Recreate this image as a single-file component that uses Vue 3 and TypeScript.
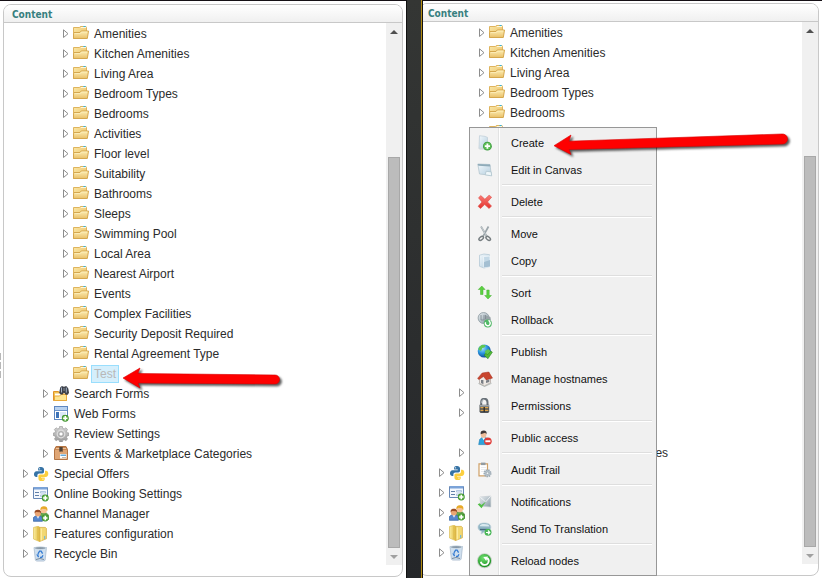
<script setup lang="ts">
interface TreeNode {
  label: string
  icon: string
  level: number
  leaf?: boolean
  selected?: boolean
}

interface MenuItem {
  label: string
  icon: string
}

const folders: string[] = [
  'Amenities', 'Kitchen Amenities', 'Living Area', 'Bedroom Types', 'Bedrooms', 'Activities',
  'Floor level', 'Suitability', 'Bathrooms', 'Sleeps', 'Swimming Pool', 'Local Area',
  'Nearest Airport', 'Events', 'Complex Facilities', 'Security Deposit Required',
  'Rental Agreement Type',
]

const nodes: TreeNode[] = [
  ...folders.map((label): TreeNode => ({ label, icon: 'folder', level: 2 })),
  { label: 'Test', icon: 'folder', level: 2, leaf: true, selected: true },
  { label: 'Search Forms', icon: 'search', level: 1 },
  { label: 'Web Forms', icon: 'webform', level: 1 },
  { label: 'Review Settings', icon: 'gear', level: 1, leaf: true },
  { label: 'Events & Marketplace Categories', icon: 'package', level: 1 },
  { label: 'Special Offers', icon: 'python', level: 0 },
  { label: 'Online Booking Settings', icon: 'form', level: 0 },
  { label: 'Channel Manager', icon: 'users', level: 0 },
  { label: 'Features configuration', icon: 'binder', level: 0 },
  { label: 'Recycle Bin', icon: 'bin', level: 0 },
]

const panes: string[] = ['before', 'after']

// Labels lying wholly beneath the open context menu are not painted.
const firstCoveredRow = 5
const widestLabel = 'Events & Marketplace Categories'

function isCovered(pane: string, row: number): boolean {
  return pane === 'after' && row >= firstCoveredRow && nodes[row].label !== widestLabel
}

const menuGroups: MenuItem[][] = [
  [{ label: 'Create', icon: 'create' }, { label: 'Edit in Canvas', icon: 'canvas' }],
  [{ label: 'Delete', icon: 'delete' }],
  [{ label: 'Move', icon: 'move' }, { label: 'Copy', icon: 'copy' }],
  [{ label: 'Sort', icon: 'sort' }, { label: 'Rollback', icon: 'rollback' }],
  [
    { label: 'Publish', icon: 'publish' },
    { label: 'Manage hostnames', icon: 'home' },
    { label: 'Permissions', icon: 'lock' },
  ],
  [{ label: 'Public access', icon: 'access' }],
  [{ label: 'Audit Trail', icon: 'audit' }],
  [{ label: 'Notifications', icon: 'notify' }, { label: 'Send To Translation', icon: 'translate' }],
  [{ label: 'Reload nodes', icon: 'reload' }],
]
</script>

<template>
  <div class="stage">
    <svg class="defs" aria-hidden="true">
      <defs>
        <linearGradient id="gFolder" x1="0" y1="0" x2="0" y2="1"><stop offset="0" stop-color="#fdeeb4" /><stop offset="1" stop-color="#e9c069" /></linearGradient>
        <linearGradient id="gFolderBack" x1="0" y1="0" x2="1" y2="1"><stop offset="0" stop-color="#fbe8a8" /><stop offset="1" stop-color="#e8bd60" /></linearGradient>
        <linearGradient id="gBinder" x1="0" y1="0" x2="1" y2="0"><stop offset="0" stop-color="#f9eda0" /><stop offset="1" stop-color="#e2b93c" /></linearGradient>
        <linearGradient id="gGear" x1="0" y1="0" x2="0" y2="1"><stop offset="0" stop-color="#d4d4d4" /><stop offset="1" stop-color="#9c9c9c" /></linearGradient>
        <linearGradient id="gPage" x1="0" y1="0" x2="1" y2="1"><stop offset="0" stop-color="#f2f8fc" /><stop offset="1" stop-color="#b4cede" /></linearGradient>
        <linearGradient id="gRed" x1="0" y1="0" x2="0" y2="1"><stop offset="0" stop-color="#fa7d76" /><stop offset="1" stop-color="#e3322e" /></linearGradient>
        <linearGradient id="gSteel" x1="0" y1="0" x2="1" y2="1"><stop offset="0" stop-color="#e9eef1" /><stop offset="1" stop-color="#8699a4" /></linearGradient>
        <radialGradient id="gGlobe" cx=".35" cy=".3" r=".75"><stop offset="0" stop-color="#a5e3ff" /><stop offset=".5" stop-color="#2b96dd" /><stop offset="1" stop-color="#0c3f91" /></radialGradient>
        <radialGradient id="gGreen" cx=".4" cy=".3" r=".75"><stop offset="0" stop-color="#6fe06f" /><stop offset="1" stop-color="#138a1a" /></radialGradient>
        <symbol id="plus" viewBox="0 0 8 8"><circle cx="4" cy="4" r="3.7" fill="#3e8e2c" /><circle cx="4" cy="4" r="2.9" fill="#62b54c" /><path d="M3.2 1.7h1.6v1.5h1.5v1.6H4.8v1.5H3.2V4.8H1.7V3.2h1.5z" fill="#fff" /></symbol>
      </defs>
      <symbol id="i-folder" viewBox="0 0 16 16">
        <path d="M.5 12.5V1.500h6l.8-1H13l.5 1v9z" fill="url(#gFolderBack)" stroke="#dfb45e" />
        <path d="M8 1.500h5" stroke="#fff6dc" /><path d="M10.500 0H12.500v1h-2z" fill="#28b5e8" />
        <path d="M.5 12.5V7.500l.5-1h6l1.200-1.500h7.300L14.300 12.5z" fill="url(#gFolder)" stroke="#d5a74d" />
        <path d="M2 7.500h5.300L8.600 6h5.600" fill="none" stroke="#fff3c8" stroke-width=".6" />
      </symbol>
      <symbol id="i-search" viewBox="0 0 16 16">
        <path d="M.5 14.5v-9h5l1 1.5h7v7.5z" fill="#f2c454" stroke="#df942a" />
        <path d="M2 7.500h10.5v3H2z" fill="#fff" /><path d="M1.5 14.500V10h5L8 8.5h5.500v6z" fill="#fde591" stroke="#e9aa3b" />
        <path d="M7.2 1.5 8.5.2h1.7l.8 1 .8-1h1.8l1.7 2.3.7 4.2-1.2 2.1h-2.2l-1-1.8-.9-.2-1 1.6H7.5L6.2 6.7z" fill="#3d4149" />
        <path d="M8.5 1.5v5M13.3 1.6v5" stroke="#a2b2c8" /><path d="M11 2v3" stroke="#89909c" />
      </symbol>
      <symbol id="i-webform" viewBox="0 0 16 16">
        <rect x="1.5" y=".5" width="13" height="13" fill="#fff" stroke="#5e87c1" /><path d="M2 1h12v3H2z" fill="#b9d2f0" /><path d="M2 4.5h12" stroke="#6e95ca" />
        <path d="M3 6h3v6H3z" fill="#3e73b8" /><path d="M7 6h6v6H7z" fill="#dbe8f7" />
        <use href="#plus" x="8.500" y="8.500" width="7.500" height="7.500" />
      </symbol>
      <symbol id="i-gear" viewBox="0 0 16 16">
        <path d="M6.7.3h2.6l.4 2 1.5.6 1.7-1.1 1.6 1.7-1 1.7.7 1.5 2 .4v2.3l-2 .5-.7 1.5 1.1 1.7-1.7 1.6-1.7-1-1.5.6-.4 1.7H6.7l-.4-1.7-1.5-.6-1.7 1-1.7-1.6 1.1-1.7-.6-1.5-1.7-.5V7.1l1.7-.4.6-1.5L1.4 3.5l1.7-1.7 1.7 1.1 1.5-.6z" fill="url(#gGear)" stroke="#929292" stroke-width=".6" />
        <circle cx="8" cy="8" r="3.8" fill="none" stroke="#dedede" stroke-width="1.2" /><circle cx="8" cy="8" r="2.1" fill="#fff" stroke="#999" stroke-width=".7" />
      </symbol>
      <symbol id="i-package" viewBox="0 0 16 16">
        <path d="m1.5 3.5 1.500-3h10l1.500 3v10h-13z" fill="#c98752" stroke="#b37443" /><path d="M2 4h12v9H2z" fill="#dfa675" />
        <path d="M3 2.5h10" stroke="#ebc19a" /><path d="M6.3 1h3.4v5l-1-.8-.8.8-.8-.8-.8.8z" fill="#4f4236" />
        <path d="M7 8h6.500v4.500H7z" fill="#fff" /><path d="M7.500 8.500h5.500v1.500H7.500z" fill="#65a9d9" /><path d="M9 11.5h4" stroke="#c2b8ac" />
      </symbol>
      <symbol id="i-python" viewBox="0 0 18 16">
        <path d="M9.100 0C5.500 0 5.800 1.700 5.800 3.500v.7h4v.6H4C2.100 4.800 1.100 6.300 1.100 8.400s1.200 3.100 2.600 3.100h1.200V9.800c0-1.300 1-2.300 2.200-2.300h3.400c1.100 0 1.900-.8 1.900-1.900V2.700C12.400 1 11.100 0 9.100 0z" fill="#3673a5" />
        <path d="M9.500 16c3.500 0 3.700-1.500 3.700-3v-1.100H9v-.6h5.300c1.800 0 2.900-1.300 2.900-3.600 0-2.200-1-3.300-2.500-3.300h-1.200v1.800c0 1.300-.9 2.400-2.100 2.400H8c-1.100 0-1.900.9-1.900 2V13c0 1.900 1.400 3 3.400 3z" fill="#fccf3e" />
        <circle cx="7.4" cy="2.200" r=".7" fill="#fff" /><circle cx="11.200" cy="13.700" r=".7" fill="#fff" />
      </symbol>
      <symbol id="i-form" viewBox="0 0 16 16">
        <path d="M.5 1.500h14v11H.5z" fill="#f4f8fd" stroke="#6788b6" /><path d="M1 1h13v2.500H1z" fill="#7ba3d8" />
        <path d="M2 6.500h4M2 9.5h4" stroke="#607fa8" /><path d="M7.5 5.500h5v1.5h-5zM7.5 9h5v1.5h-5z" fill="#e8f0f9" stroke="#9bb6d7" stroke-width=".7" />
        <use href="#plus" x="8.5" y="8" width="7.500" height="8" />
      </symbol>
      <symbol id="i-users" viewBox="0 0 16 16">
        <path d="M6.5 12V8.2L8.3 7h5l2.3 2v4.5H8z" fill="#65a950" stroke="#468737" stroke-width=".6" />
        <circle cx="10.8" cy="4.2" r="3.1" fill="#f8c394" /><path d="M7.4 4.3C7 1 9 .1 11 .2c2.8 0 4 2 3.2 4.8L13 3.2 9.3 2.8z" fill="#e7aa28" />
        <path d="M.4 15.3v-3.7L2.4 10h5l2 1.6v3.7z" fill="#5686cd" stroke="#315f9e" stroke-width=".7" />
        <path d="M3.5 10h3L5 12.7z" fill="#e5f0fe" /><circle cx="4.9" cy="7.4" r="3" fill="#eba674" />
        <path d="M1.6 7.5C1.1 4.6 3 3.6 5 3.7c2.5.1 3.7 1.6 3.1 4L7 6.2 3 5.9z" fill="#994b23" />
        <use href="#plus" x="8.5" y="8" width="7.5" height="8" />
      </symbol>
      <symbol id="i-binder" viewBox="0 0 16 16">
        <path d="M.5 1.5 5 .3 6.5 1v14.5L.5 13z" fill="url(#gBinder)" stroke="#ddbd55" stroke-width=".7" />
        <path d="M6.6 1.4h5.8l1 1v10.4l-6.8 2.7z" fill="#f2d873" stroke="#d4a834" stroke-width=".7" />
        <path d="M8.3 2.5v12" stroke="#fff0a9" /><path d="M11.7 10v3" stroke="#62b3df" /><path d="M4.8 1v13" stroke="#dab74b" stroke-width=".7" />
      </symbol>
      <symbol id="i-bin" viewBox="0 0 16 16">
        <path d="M1 1.5h12.5l-1.4 12.8-1.4.8H3.8l-1.4-.8z" fill="#cfdfee" stroke="#a3b6ca" stroke-width=".7" />
        <ellipse cx="7.2" cy="2.1" rx="6" ry="1.4" fill="#8798a8" stroke="#d9e5ef" stroke-width=".7" />
        <path d="m4.9 7.8 1.7-2.6h1.5l1.5 2.4M10 9.3 8.8 11.4H7M5.6 11.2 4.3 9l1.4-.2" fill="none" stroke="#347bd2" stroke-width="1.3" />
        <path d="m3 13.5 4-1 4 1" fill="none" stroke="#788a9c" />
      </symbol>
      <symbol id="i-create" viewBox="0 0 16 16">
        <path d="M2.5.7 8 1.4l2.5 1v11.3H2z" fill="url(#gPage)" stroke="#bccbd5" stroke-width=".7" /><path d="M1 12.8h10l-2 1.8H3z" fill="#d2dade" />
        <circle cx="10.4" cy="11.2" r="4.4" fill="#3a9b3e" /><circle cx="10.4" cy="11.2" r="3.6" fill="#5dbd56" /><path d="M9.5 8.6h1.8v1.7H13v1.8h-1.7v1.7H9.5v-1.7H7.8v-1.8h1.7z" fill="#fff" />
      </symbol>
      <symbol id="i-canvas" viewBox="0 0 16 16">
        <path d="M.8 2 13 2.5l1.3 10.8L2.5 12z" fill="url(#gPage)" stroke="#b4c5ce" stroke-width=".8" /><path d="m.8 2 12.2.5.3 1.900L1.3 3.800z" fill="#8fabb9" />
        <path d="m8.2 12.8 1-3.500 5 .6.5 4z" fill="#eff7fa" stroke="#a9bec9" stroke-width=".7" />
      </symbol>
      <symbol id="i-delete" viewBox="0 0 16 16"><path d="m1.5 3.8 2.3-2.2 4.1 3.6 4.2-4 2.5 2-4.1 4.7 4 4.1-2.4 2.5-4.4-4-4.2 4-2.4-2.2L5 8z" fill="url(#gRed)" stroke="#dd4a45" stroke-width=".6" /></symbol>
      <symbol id="i-move" viewBox="0 0 16 16">
        <path d="M4 .5 10.2 11M11.5.5 5.8 10.8" stroke="#9ba5aa" stroke-width="1.7" /><path d="m4.2.6 6 10.4" stroke="#e2e7e9" stroke-width=".6" />
        <ellipse cx="4.2" cy="12.4" rx="2.6" ry="1.5" transform="rotate(-40 4.2 12.4)" fill="none" stroke="#767d80" stroke-width="1.500" /><ellipse cx="11.2" cy="12.4" rx="2.6" ry="1.5" transform="rotate(40 11.2 12.4)" fill="none" stroke="#767d80" stroke-width="1.500" />
      </symbol>
      <symbol id="i-copy" viewBox="0 0 16 16">
        <path d="M2.5 2.2 7 1l5.5.7v12L7 15l-4.5-1.7z" fill="url(#gPage)" stroke="#afc4d3" stroke-width=".7" /><path d="M6.5 3.5 13 3v10.7l-6 1z" fill="#c4d9e7" stroke="#f2f8fb" stroke-width=".8" /><path d="m7 9 6-2v6.5l-6 1z" fill="#a4bfd2" />
      </symbol>
      <symbol id="i-sort" viewBox="0 0 16 16"><path d="m4.8 1 3.3 3.5H6v5H3.5v-5H1.3zM11 14l-3.3-3.5h2.1V5h2.4v5.5h2.2z" fill="#5bd140" stroke="#42af2e" stroke-width=".5" /></symbol>
      <symbol id="i-rollback" viewBox="0 0 16 16">
        <circle cx="6.6" cy="6" r="5.5" fill="url(#gSteel)" stroke="#8d999f" stroke-width=".8" /><path d="M9 3.4 13.4 5l1 6-4 3.2-4.2-3z" fill="#97a2a7" /><path d="M4 3v5h3V3M8.5 3v4" fill="none" stroke="#7b868d" stroke-width=".8" />
        <circle cx="10.8" cy="11.4" r="4" fill="#51b967" /><path d="M8.6 10.2a2.4 2.4 0 1 0 3.6-.9" fill="none" stroke="#fff" stroke-width="1.3" /><path d="m11.1 8 2.6.5-1.5 2z" fill="#fff" />
      </symbol>
      <symbol id="i-publish" viewBox="0 0 16 16">
        <circle cx="7.3" cy="7" r="6.6" fill="url(#gGlobe)" /><path d="M2 3.3 5 .8l4 .5-1.6 2.3-2 .5L4 7 1.2 5.5zM8 7l3.3-2 2.4 2.3-.8 3-3.5 2.6-1.3-3.1z" fill="#61c751" />
        <path d="m7 11 2.2-1.6 1.2 1.5L13.9 7l1.5 1.2-4.5 6.6z" fill="#54b936" stroke="#247f25" stroke-width=".5" />
      </symbol>
      <symbol id="i-home" viewBox="0 0 16 16">
        <path d="m2.5 7.5 4-3 7 2v5.3l-6 3-5-2.5z" fill="#eee9e4" stroke="#a19690" stroke-width=".6" /><path d="M10.5 1h2v3h-2z" fill="#c8b7ac" /><path d="M.6 7.4 5.2 2l6.5-1 3.8 6.1-6.2 1.8-2.8-3.4-4.6 3.1z" fill="#c8452e" stroke="#a62d1e" stroke-width=".5" />
        <path d="M4 9h2.4v4.2L4 12zM9 9.5l3.3-1v2.4L9 12z" fill="#797e85" /><path d="m1.5 12.5 6 3 7-3.2" fill="none" stroke="#9ca5a0" stroke-width=".7" />
      </symbol>
      <symbol id="i-lock" viewBox="0 0 16 16">
        <path d="M4.2 7V4.3C4.2 1.900 5.400.8 7.300.8s3.200 1.100 3.200 3.500V7" fill="none" stroke="#697178" stroke-width="2" /><path d="M4.7 5V4.2c0-2 1.1-2.7 2.5-2.7" fill="none" stroke="#d0d7dc" stroke-width=".7" />
        <path d="M2.5 6.7h9.7v7l-1 1.3H3.5l-1-1.3z" fill="#515457" /><path d="M2.7 7h9.3v1.6H2.7z" fill="#a1a7ab" /><path d="M3.5 9.7h7.8M3.5 12.3h7.8" stroke="#dfa347" stroke-width="1.3" /><path d="M7.2 9v5" stroke="#2b2925" stroke-width="1.3" />
      </symbol>
      <symbol id="i-access" viewBox="0 0 16 16">
        <path d="m1.7 14.6 1-5.2L5 7.5h4l2 2v5.1z" fill="#2da3dc" stroke="#187bb3" stroke-width=".6" /><path d="m5 7.3 1.5 3L8.7 7.3z" fill="#eff8fd" /><ellipse cx="6.6" cy="4.4" rx="2.8" ry="3.4" fill="#efbd9a" /><path d="M3.7 4.2C3.2 1.6 4.7.5 6.8.5s3.4 1.3 2.6 3.7L8.2 2.7z" fill="#403938" />
        <circle cx="10.9" cy="11.2" r="3.8" fill="#df3c38" /><path d="M8.4 10.3h5v1.9h-5z" fill="#fff" />
      </symbol>
      <symbol id="i-audit" viewBox="0 0 16 16">
        <path d="M2 1.8h8.500v12H2z" fill="#fff" stroke="#cfa066" stroke-width="1.200" /><path d="M4 .6h4.500v2.500H4z" fill="#929ba1" /><path d="M4 5.5h5M4 7.5h5M4 9.5h3" stroke="#dfe3e6" stroke-width=".7" />
        <circle cx="10.5" cy="11.3" r="3.2" fill="#bcc7cf" stroke="#9dabb5" stroke-width="1.7" stroke-dasharray="1.4 .8" /><circle cx="10.5" cy="11.3" r="1.3" fill="#edf2f4" stroke="#8a98a3" stroke-width=".6" />
      </symbol>
      <symbol id="i-notify" viewBox="0 0 16 16">
        <path d="m3 3 10.8-1v11L3.5 12z" fill="url(#gSteel)" stroke="#c3cace" stroke-width=".6" /><path d="m3.2 3.2 5.5 4.7 5-5.7" fill="none" stroke="#f7fafb" stroke-width=".8" /><path d="m.7 10.3 2-1 1.7 1.8L9 7.5l-4.5 6.8z" fill="#51be46" />
      </symbol>
      <symbol id="i-translate" viewBox="0 0 16 16">
        <path d="M1 6.2C1 3.500 3.400 2 7.200 2s6.600 1.200 6.600 4.200-2.600 4.500-6.400 4.500L4.200 13l.3-2.800C2.200 9.600 1 8.200 1 6.200z" fill="#8eb3c3" stroke="#bdd0d8" stroke-width=".7" /><path d="M2.5 5.2c.5-1.800 2.100-2.300 4.700-2.300 3.100 0 4.800.7 5.200 2.500z" fill="#d8e9ef" /><path d="M3 8.5h7" stroke="#46687a" stroke-width="1.300" />
        <circle cx="11" cy="11.2" r="3.5" fill="#49b657" /><path d="M9 11.5h3.5M11 9.5l1.8 2-1.8 1.7" fill="none" stroke="#fff" stroke-width="1.2" />
      </symbol>
      <symbol id="i-reload" viewBox="0 0 16 16">
        <circle cx="7.5" cy="7.700" r="7.500" fill="#c3cfc3" /><circle cx="7.5" cy="7.700" r="6.600" fill="url(#gGreen)" /><path d="M3.8 8.800a4 4 0 0 0 7.400 1.100 4 4 0 0 0-1-4.900" fill="none" stroke="#fff" stroke-width="1.800" /><path d="M11 3.400 6.300 3.900l2.900 4z" fill="#fff" />
      </symbol>
    </svg>

    <template v-for="(pane, index) in panes" :key="pane">
      <div v-if="index === 1" class="gutter"></div>
      <main class="pane" :class="pane">
        <section class="panel">
          <h2 class="panel-title">Content</h2>
          <div class="panel-body">
            <ul class="tree">
              <li v-for="(node, row) in nodes" :key="node.label" class="node" :class="'level-' + node.level">
                <button class="expander" :class="{ leaf: node.leaf }" type="button" :disabled="node.leaf" :aria-label="'Expand ' + node.label">
                  <svg viewBox="0 0 6 10"><path d="M.5.8v7.700L5 4.700z" fill="#fff" stroke="#8c8c8c" /></svg>
                </button>
                <svg class="icon"><use :href="'#i-' + node.icon" /></svg>
                <a v-if="!isCovered(pane, row)" href="#" class="label" :class="{ selected: node.selected }">{{ node.label }}</a>
              </li>
            </ul>
            <div class="scrollbar">
              <button class="scroll-button" type="button" aria-label="Scroll up"><svg viewBox="0 0 8 4"><path d="M4 0 8 4H0z" fill="#505050" /></svg></button>
              <div class="track"><div class="thumb"></div></div>
              <button class="scroll-button" type="button" aria-label="Scroll down"><svg viewBox="0 0 8 4"><path d="M0 0h8L4 4z" fill="#a0a0a0" /></svg></button>
            </div>
          </div>
        </section>
        <div v-if="index === 0" class="grip"><i></i><i></i><i></i></div>
        <svg v-if="index === 0" class="arrow arrow-test" width="168" height="30" viewBox="0 0 168 30">
          <path d="M1 12 18 2 16 7.500 153 9a4.500 4.500 0 0 1 0 9L16 17l2 5z" fill="#fe0000" stroke="#d80000" stroke-width=".6" />
        </svg>
        <nav v-if="index === 1" class="menu">
          <ul v-for="(group, g) in menuGroups" :key="g" class="group">
            <li v-for="item in group" :key="item.label">
              <button class="menu-item" type="button">
                <svg class="icon"><use :href="'#i-' + item.icon" /></svg>
                <span>{{ item.label }}</span>
              </button>
            </li>
          </ul>
        </nav>
        <svg v-if="index === 1" class="arrow arrow-create" width="244" height="32" viewBox="0 0 244 32">
          <path d="M1 15.700 18 5 16 11.200 229 4a5 5 0 0 1 1 10L16 19.500l2 5z" fill="#fe0000" stroke="#d80000" stroke-width=".6" />
        </svg>
      </main>
    </template>
  </div>
</template>

<style>
body {
  background: #fff;
}
</style>

<style scoped>
.stage {
  display: grid;
  grid-template-columns: 406fr 17px 399fr;
  min-height: 100vh;
  font-family: "Liberation Sans", Arial, sans-serif;
  font-size: 12px;
  color: #2b2b2b;
}
.defs {
  position: absolute;
  width: 0;
  height: 0;
}
ul {
  list-style: none;
  margin: 0;
  padding: 0;
}
button {
  border: 0;
  padding: 0;
  background: none;
  font: inherit;
  color: inherit;
}
.pane {
  position: relative;
  display: flex;
  flex-direction: column;
  min-width: 0;
  overflow: hidden;
  box-sizing: border-box;
  border-top: 1px solid #151015;
}
.before {
  padding: 3px 3px 1px;
}
.after {
  padding: 2px 3px 2px 0;
}
.after .panel {
  margin-left: -4px;
}
.gutter {
  box-sizing: border-box;
  border-left: 1px solid #111;
  border-right: 1px solid #111;
  background: linear-gradient(90deg, transparent 14px, #b28b10 14px), linear-gradient(#343634, #25272a);
}
.panel {
  flex: 1;
  display: flex;
  flex-direction: column;
  border: 1px solid #c8c8c8;
  border-radius: 8px;
  overflow: hidden;
}
.panel-title {
  margin: 0;
  padding: 2px 8px 0;
  border-bottom: 1px solid #c8c8c8;
  background: linear-gradient(#fff, #f0f0f0);
  font-family: "DejaVu Sans Condensed", "DejaVu Sans", sans-serif;
  font-size: 10px;
  font-weight: bold;
  line-height: 15px;
  color: #378080;
}
.panel-body {
  flex: 1;
  display: flex;
  margin-bottom: 11px;
}
.tree {
  flex: 1;
  min-width: 0;
  padding-top: 1px;
}
.node {
  display: flex;
  align-items: center;
  height: 20px;
  padding-left: 19px;
}
.level-1 {
  padding-left: 39px;
}
.level-2 {
  padding-left: 59px;
}
.expander {
  width: 6px;
  height: 10px;
  margin-right: 4px;
}
.expander svg {
  display: block;
  width: 6px;
  height: 10px;
}
.expander.leaf {
  visibility: hidden;
}
.icon {
  flex: none;
  width: 16px;
  height: 16px;
}
.label {
  margin-left: 2px;
  padding: 0 3px;
  line-height: 20px;
  white-space: nowrap;
  color: inherit;
  text-decoration: none;
}
.label.selected {
  padding: 0 2px;
  border: 1px solid #99defd;
  background: #d5effc;
  line-height: 16px;
  color: #b8b8b8;
}
.scrollbar {
  display: flex;
  flex-direction: column;
  width: 16px;
  background: #f0f0f0;
}
.scroll-button {
  display: flex;
  align-items: center;
  justify-content: center;
  height: 17px;
}
.scroll-button svg {
  width: 8px;
  height: 4px;
}
.track {
  flex: 1;
  display: flex;
  flex-direction: column;
  justify-content: flex-end;
  padding: 0 2px;
}
.thumb {
  height: 77%;
  box-sizing: border-box;
  border: 1px solid #a8a8a8;
  background: #bcbcbc;
}
.grip {
  position: absolute;
  left: 0;
  top: 352px;
  display: grid;
  gap: 2px;
}
.grip i {
  width: 1px;
  height: 7px;
  background: #b8b8b8;
}
.menu {
  position: absolute;
  left: 46px;
  top: 126px;
  width: 188px;
  box-sizing: border-box;
  padding: 2px 4px 0 0;
  border: 1px solid #979797;
  background: linear-gradient(90deg, #f3f3f3 28px, #e2e3e3 28px, #e2e3e3 29px, #fff 29px, #fff 30px, #f0f0f0 30px);
  font-size: 11px;
  color: #111;
}
.group + .group {
  padding-top: 5px;
  background: linear-gradient(#dedede 1px, #fff 1px, #fff 2px, transparent 2px) 32px 0 no-repeat;
}
.menu-item {
  display: flex;
  align-items: center;
  gap: 18px;
  width: 100%;
  height: 27px;
  padding-left: 7px;
  padding-bottom: 2px;
  text-align: left;
}
.arrow {
  position: absolute;
  filter: drop-shadow(2px 2px 1px rgb(0 0 0 / 65%));
  pointer-events: none;
}
.arrow-test {
  left: 122px;
  top: 365px;
}
.arrow-create {
  left: 130px;
  top: 129px;
}
</style>
